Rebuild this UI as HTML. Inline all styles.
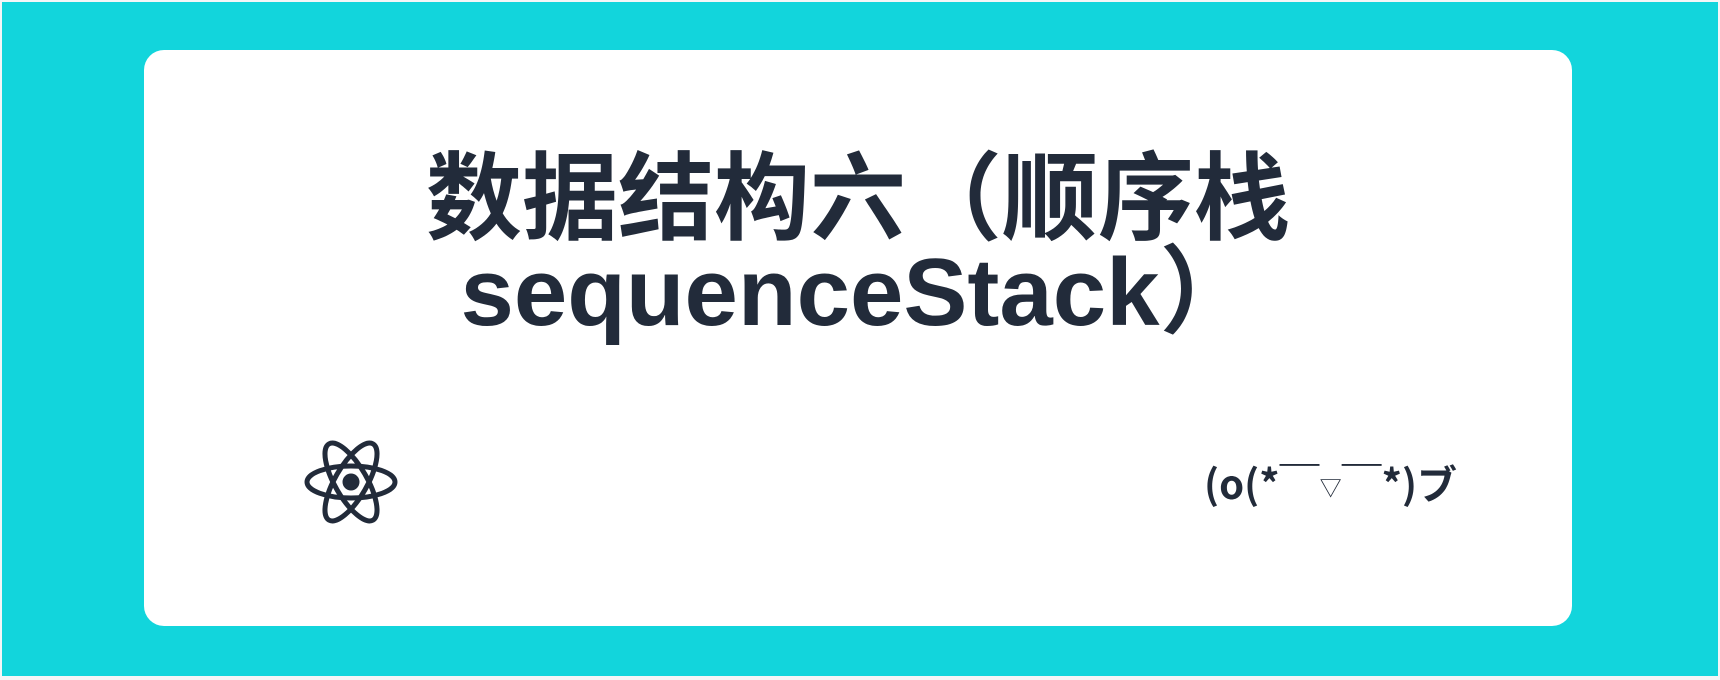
<!DOCTYPE html>
<html><head><meta charset="utf-8">
<style>
html,body{margin:0;padding:0;}
body{width:1720px;height:680px;background:#f4f6f7;position:relative;overflow:hidden;}
.bg{position:absolute;left:2px;top:2px;width:1716px;height:674px;background:#12d5dc;}
.card{position:absolute;left:144px;top:50px;width:1428px;height:576px;background:#fff;border-radius:20px;}
.title{position:absolute;left:144px;top:153px;width:1428px;text-align:center;font-family:"Liberation Sans","Noto Sans CJK SC",sans-serif;font-weight:bold;font-size:96px;line-height:93px;color:#222b3a;white-space:nowrap;}
.kao{position:absolute;left:1204px;top:456px;font-family:"Noto Sans CJK JP",sans-serif;font-weight:bold;font-size:40px;line-height:52px;color:#222b3a;white-space:nowrap;}
.kao .s{font-size:22px;font-weight:normal;position:relative;top:-3px;}
svg{position:absolute;left:301px;top:432px;}
</style></head><body>
<div class="bg"></div>
<div class="card"></div>
<div class="title">数据结构六（顺序栈<br>sequenceStack）</div>
<svg width="100" height="100" viewBox="0 0 100 100">
<g fill="none" stroke="#222b3a" stroke-width="5" transform="translate(50,50)">
<ellipse rx="44" ry="16"/>
<ellipse rx="44" ry="16" transform="rotate(60)"/>
<ellipse rx="44" ry="16" transform="rotate(120)"/>
</g>
<circle cx="50" cy="50" r="8.5" fill="#222b3a"/>
</svg>
<div class="kao">(o(*￣<span class="s">▽</span>￣*)ブ</div>
</body></html>
